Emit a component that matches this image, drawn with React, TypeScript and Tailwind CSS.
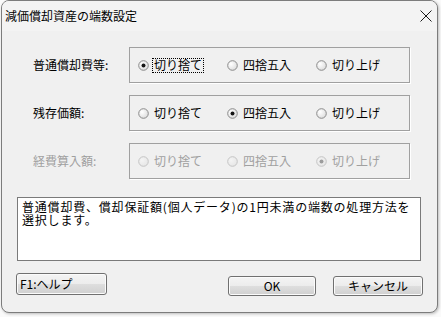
import React from "react";

const FONT = { fontFamily: '"Noto Sans CJK JP", "Noto Sans", sans-serif' };

function Radio({ checked, disabled }: { checked?: boolean; disabled?: boolean }) {
  const stroke = disabled ? "#c4c4c4" : "#8a8a8a";
  const dot = disabled ? "#9c9c9c" : "#141414";
  return (
    <svg width="11" height="11" viewBox="0 0 11 11" className="shrink-0">
      <defs>
        <radialGradient id={disabled ? "rgd" : "rg"} cx="0.35" cy="0.35" r="0.8">
          <stop offset="0" stopColor={disabled ? "#f4f4f4" : "#ffffff"} />
          <stop offset="1" stopColor={disabled ? "#e4e4e4" : "#d8d8d8"} />
        </radialGradient>
      </defs>
      <circle cx="5.5" cy="5.5" r="4.8" fill={`url(#${disabled ? "rgd" : "rg"})`} stroke={stroke} strokeWidth="1" />
      {checked && <circle cx="5.5" cy="5.5" r="2" fill={dot} />}
    </svg>
  );
}

function Option({
  label,
  checked,
  disabled,
  focused,
}: {
  label: string;
  checked?: boolean;
  disabled?: boolean;
  focused?: boolean;
}) {
  return (
    <div className="flex items-center w-[89px] shrink-0">
      <Radio checked={checked} disabled={disabled} />
      <span
        className={`ml-[4px] px-[1px] text-[12px] leading-[12px] h-[13px] flex items-center ${
          disabled ? "text-[#a0a0a0]" : "text-black"
        } ${focused ? "outline outline-1 outline-dotted outline-black" : ""}`}
      >
        {label}
      </span>
    </div>
  );
}

function Row({
  label,
  sel,
  disabled,
  focusFirst,
}: {
  label: string;
  sel: number;
  disabled?: boolean;
  focusFirst?: boolean;
}) {
  const opts = ["切り捨て", "四捨五入", "切り上げ"];
  return (
    <div className="flex items-center">
      <div className={`w-[96px] text-[12px] leading-[14px] ${disabled ? "text-[#a0a0a0]" : "text-black"}`}>{label}</div>
      <div className="w-[281px] h-[36px] border border-[#a0a0a0] shadow-[1px_1px_0_#ffffff] flex items-center pl-[8px]">
        {opts.map((o, i) => (
          <Option key={o} label={o} checked={i === sel} disabled={disabled} focused={focusFirst && i === 0} />
        ))}
      </div>
    </div>
  );
}

const btn =
  "border border-[#707070] rounded-[3px] bg-[linear-gradient(to_bottom,#f4f4f4_0%,#ececec_50%,#dedede_51%,#d0d0d0_100%)] shadow-[inset_0_0_0_1px_#fbfbfb] text-[12px] leading-[12px] text-black flex items-center";

export default function App() {
  return (
    <div className="w-[441px] h-[317px] bg-[#fafafa] overflow-hidden" style={FONT}>
      <div className="ml-[1px] w-[437px] h-[313px] rounded-[8px] border border-[#7c7c7c] bg-[#f0f0f0] flex flex-col overflow-hidden shadow-[1px_1px_3px_rgba(0,0,0,0.25)]">
        <div className="h-[30px] shrink-0 flex items-center justify-between pl-[3px] pr-[5px] bg-[#f3f3f3]">
          <span className="text-[12px] leading-[14px] text-black">減価償却資産の端数設定</span>
          <svg width="12" height="12" viewBox="0 0 12 12">
            <path d="M0.5 0.5 L11.5 11.5 M11.5 0.5 L0.5 11.5" stroke="#1a1a1a" strokeWidth="1" />
          </svg>
        </div>
        <div className="flex flex-col pl-[31px] pt-[16px] gap-[12px]">
          <Row label="普通償却費等:" sel={0} focusFirst />
          <Row label="残存価額:" sel={1} />
          <Row label="経費算入額:" sel={2} disabled />
        </div>
        <div className="ml-[15px] mt-[18px] w-[404px] h-[64px] bg-white border border-[#7a7a7a] px-[4px] pt-[2px] text-[12px] leading-[13px] tracking-[0.8px] text-black">
          普通償却費、償却保証額(個人データ)の1円未満の端数の処理方法を
          <br />
          選択します。
        </div>
        <div className="flex items-start mt-[12px] ml-[14px]">
          <button className={`${btn} w-[91px] h-[22px] pl-[3px]`}>F1:ヘルプ</button>
          <button className={`${btn} w-[88px] h-[20px] justify-center mt-[3px] ml-[121px]`}>OK</button>
          <button className={`${btn} w-[90px] h-[20px] justify-center mt-[3px] ml-[17px]`}>キャンセル</button>
        </div>
      </div>
    </div>
  );
}
